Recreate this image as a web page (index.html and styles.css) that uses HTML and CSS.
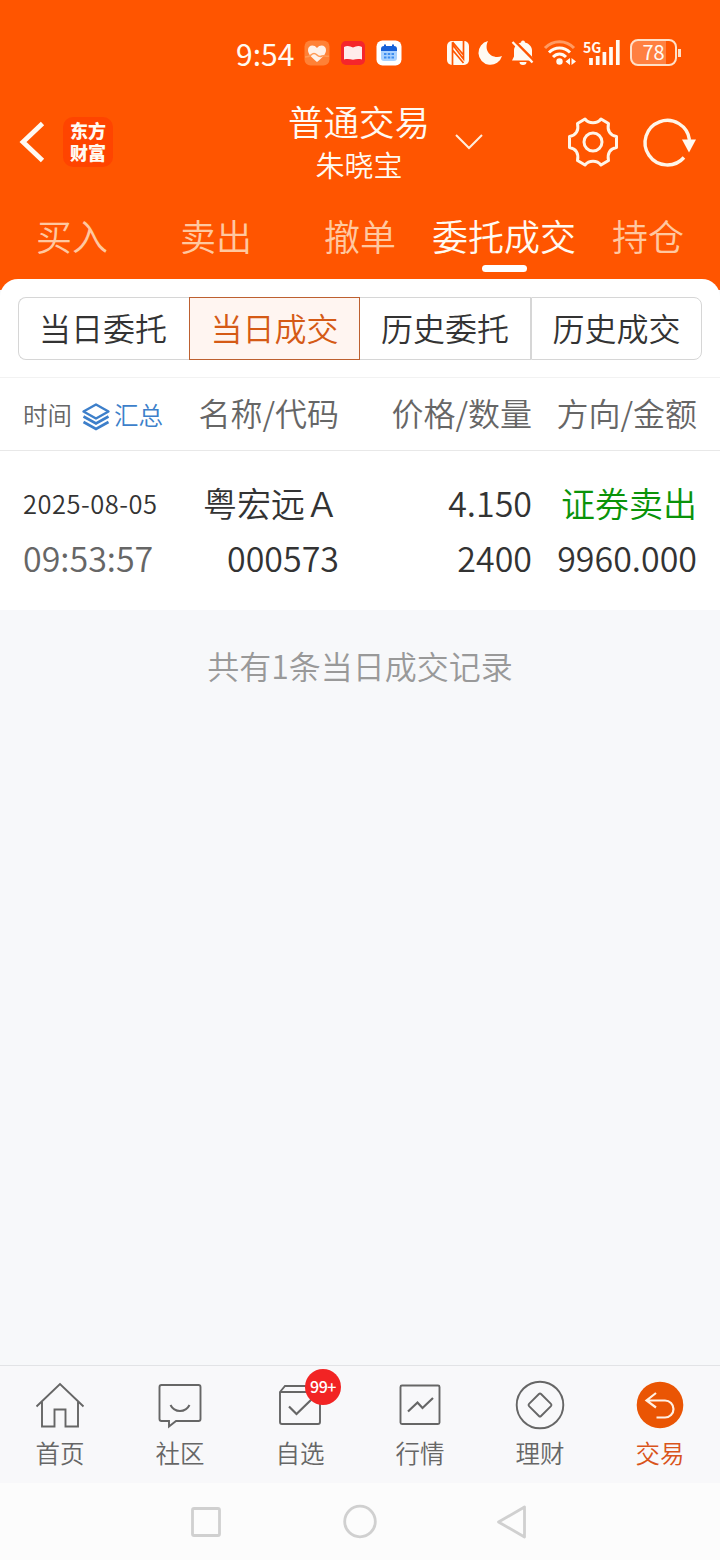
FILE: index.html
```html
<!DOCTYPE html>
<html lang="zh-CN">
<head>
    <meta charset="UTF-8">
    <meta name="viewport" content="width=device-width, initial-scale=1.0">
    <title>普通交易</title>
    <link rel="stylesheet" href="styles.css">
</head>
<body>
    <div class="app">
        <header class="header">
            <div class="status-bar">
                <span class="clock">9:54</span>
                <div class="status-apps">
                    <svg width="26" height="26" viewBox="0 0 26 26">
                        <rect x="0.5" y="0.5" width="25" height="25" rx="6" fill="#ff8136"/>
                        <path d="M13 22C7 17 4 14 4 10c0-5 6-6 9-2 3-4 9-3 9 2 0 4-3 7-9 12z" fill="#fff1e8"/>
                        <path d="M1 17c3 0 4 0 6-2s4-2 6 0 3 2 5 1 4 1 7 0" fill="none" stroke="#ff9a55" stroke-width="1.6"/>
                    </svg>
                    <svg width="26" height="26" viewBox="0 0 26 26">
                        <rect x="1" y="1" width="24" height="24" rx="5" fill="#f5262b"/>
                        <path d="M4 7c3-1.500 6-1 9 .6C16 6 19 5.500 22 7v12.500c-3-.6-6-.5-9 .3-3-.8-6-.9-9-.3z" fill="#ffeceb"/>
                    </svg>
                    <svg width="26" height="26" viewBox="0 0 26 26">
                        <rect x="0.500" y="0.500" width="25" height="25" rx="6" fill="#fff"/>
                        <path d="M5 11h16v7a3 3 0 0 1-3 3H8a3 3 0 0 1-3-3z" fill="#a9d2ff"/>
                        <path d="M5 11V9a3 3 0 0 1 3-3h10a3 3 0 0 1 3 3v2z" fill="#1560d8"/>
                        <path d="M9 4.500v3M17 4.500v3" stroke="#1560d8" stroke-width="2"/>
                        <path d="M8 14h10M8 17.500h10" stroke="#3d8df0" stroke-width="2" stroke-dasharray="2.500 1.250"/>
                    </svg>
                </div>
                <div class="status-icons">
                    <svg width="22" height="24" viewBox="0 0 22 24">
                        <rect x="0" y="0" width="22" height="24" rx="5" fill="#fffaf2"/>
                        <path d="M5.500 24V3.500L16.500 18V0M5.500 9l11 13M5.500 1l11 13" fill="none" stroke="#ff5500" stroke-width="1.700"/>
                    </svg>
                    <svg width="24" height="24" viewBox="0 0 24 24">
                        <path d="M10 0A12 12 0 1 0 24 15C14 19 5 10 10 0z" fill="#fffaf2"/>
                    </svg>
                    <svg width="24" height="25" viewBox="0 0 24 25">
                        <path d="M12 0.500a2 2 0 0 1 2 2c4 1 7 4 7 8v6l2 4H1l2-4v-6c0-4 3-7 7-8a2 2 0 0 1 2-2zM8.500 22h7a3.500 3 0 0 1-7 0z" fill="#fffaf2"/>
                        <path d="M3.500 1l20 20" stroke="#ff5500" stroke-width="2.500"/>
                        <path d="M1.500 2l20 20.500" stroke="#fffaf2" stroke-width="2.300"/>
                    </svg>
                    <svg width="32" height="25" viewBox="0 0 32 25">
                        <path d="M1 8c8-8.500 21-8.500 29 0" fill="none" stroke="#ff9b63" stroke-width="3"/>
                        <path d="M5 12.500c6-6 15-6 21 0M9 17c4-4 9-4 13 0" fill="none" stroke="#fffaf2" stroke-width="3"/>
                        <circle cx="15.500" cy="21.500" r="3.200" fill="#fffaf2"/>
                        <path d="M26 18v7l-4.500-3.500zM27.500 18v7l4.500-3.500z" fill="#fffaf2"/>
                    </svg>
                    <div class="signal">
                        <span class="signal-label">5G</span>
                        <svg width="31" height="25" viewBox="0 0 31 25">
                            <path d="M2 25v-7M8.700 25v-9M15.400 25v-13M22 25V7M28.800 25V0" stroke="#fffaf2" stroke-width="3.700"/>
                        </svg>
                    </div>
                    <div class="battery">78</div>
                </div>
            </div>

            <div class="title-bar">
                <svg width="26" height="42" viewBox="0 0 26 42">
                    <path d="M23.500 2.500L4 21l19.500 18.500" fill="none" stroke="#fffaf2" stroke-width="4.800"/>
                </svg>
                <div class="logo">
                    <span>东方</span>
                    <span>财富</span>
                </div>
                <div class="title">
                    <h1>普通交易</h1>
                    <p>朱晓宝</p>
                </div>
                <svg class="chevron" width="28" height="18" viewBox="0 0 28 18">
                    <path d="M1 2l13 13L27 2" fill="none" stroke="#ffeedd" stroke-width="2"/>
                </svg>
                <svg class="gear" width="50" height="50" viewBox="0 0 50 50">
                    <path d="M9.500 6.500L17 2c4 5 12 5 16 0l7.500 4.500c-1.500 7 1.500 12 8 13v11c-6.500 1-9.500 6-8 13L33 48c-4-5-12-5-16 0l-7.500-4.500c1.500-7-1.500-12-8-13v-11c6.500-1 9.500-6 8-13z" fill="none" stroke="#fff5e8" stroke-width="3" stroke-linejoin="round"/>
                    <circle cx="25" cy="25" r="9" fill="none" stroke="#fff5e8" stroke-width="3"/>
                </svg>
                <svg class="refresh" width="54" height="50" viewBox="0 0 54 50">
                    <path d="M41 40.500A22.300 22.300 0 1 1 46.500 23" fill="none" stroke="#fff5e8" stroke-width="3.400"/>
                    <path d="M39 22.500h14l-7 13z" fill="#fffaf2"/>
                </svg>
            </div>

            <nav class="tabs">
                <a class="tab">买入</a>
                <a class="tab">卖出</a>
                <a class="tab">撤单</a>
                <a class="tab active">委托成交</a>
                <a class="tab">持仓</a>
            </nav>
        </header>

        <main class="content">
            <section class="sheet">
                <div class="segments">
                    <a class="segment">当日委托</a>
                    <a class="segment active">当日成交</a>
                    <a class="segment">历史委托</a>
                    <a class="segment">历史成交</a>
                </div>

                <div class="row table-head">
                    <div class="time-head">
                        <span>时间</span>
                        <svg width="28" height="28" viewBox="0 0 28 28">
                            <path d="M14 1.500L26.500 8.500 14 15.500 1.500 8.500z" fill="none" stroke="#3d7fca" stroke-width="2.400" stroke-linejoin="round"/>
                            <path d="M1.500 13.500L14 20.500l12.500-7M1.500 19L14 26l12.500-7" fill="none" stroke="#3d7fca" stroke-width="2.600"/>
                        </svg>
                        <span class="summary">汇总</span>
                    </div>
                    <span>名称/代码</span>
                    <span>价格/数量</span>
                    <span>方向/金额</span>
                </div>

                <div class="row record">
                    <span class="date">2025-08-05</span>
                    <span>粤宏远Ａ</span>
                    <span>4.150</span>
                    <span class="sell">证券卖出</span>
                    <span class="time">09:53:57</span>
                    <span>000573</span>
                    <span>2400</span>
                    <span>9960.000</span>
                </div>
            </section>
            <p class="total">共有1条当日成交记录</p>
        </main>

        <nav class="bottom-nav">
            <a class="nav-item">
                <svg width="50" height="50" viewBox="0 0 50 50">
                    <path d="M1.500 25.500L25 3l23.500 22.500M7 21v24.500h12.500v-17h11v17H43V21" fill="none" stroke="#666" stroke-width="1.900"/>
                </svg>
                <span>首页</span>
            </a>
            <a class="nav-item">
                <svg width="50" height="50" viewBox="0 0 50 50">
                    <path d="M6.500 4h37a2 2 0 0 1 2 2v32a2 2 0 0 1-2 2H21l-7 5.500V40H6.500a2 2 0 0 1-2-2V6a2 2 0 0 1 2-2z" fill="none" stroke="#666" stroke-width="1.900"/>
                    <path d="M15.500 24c4 8 15 8 19 0" fill="none" stroke="#666" stroke-width="2"/>
                </svg>
                <span>社区</span>
            </a>
            <a class="nav-item">
                <svg width="50" height="50" viewBox="0 0 50 50">
                    <path d="M5 11l5-6h29l6 6v30a2 2 0 0 1-2 2H7a2 2 0 0 1-2-2zM5 11h40" fill="none" stroke="#666" stroke-width="1.900"/>
                    <path d="M14 25.500l7.500 7.500L38 17" fill="none" stroke="#666" stroke-width="2.200"/>
                </svg>
                <b class="badge">99+</b>
                <span>自选</span>
            </a>
            <a class="nav-item">
                <svg width="50" height="50" viewBox="0 0 50 50">
                    <rect x="5.500" y="4.500" width="39" height="38.500" rx="1.500" fill="none" stroke="#666" stroke-width="1.900"/>
                    <path d="M13 30.500l9.500-9 5 5.500L38 17" fill="none" stroke="#666" stroke-width="2.200"/>
                </svg>
                <span>行情</span>
            </a>
            <a class="nav-item">
                <svg width="50" height="50" viewBox="0 0 50 50">
                    <circle cx="25" cy="24" r="23.300" fill="none" stroke="#666" stroke-width="1.900"/>
                    <rect x="16.500" y="15.500" width="17" height="17" rx="1.500" transform="rotate(45 25 24)" fill="none" stroke="#666" stroke-width="1.900"/>
                </svg>
                <span>理财</span>
            </a>
            <a class="nav-item active">
                <svg width="50" height="50" viewBox="0 0 50 50">
                    <circle cx="25" cy="24" r="23.300" fill="#ea5504"/>
                    <path d="M21 12L11.500 19.500l9.500 7M12 19.500h18a8.500 8.500 0 0 1 0 17h-8.500" fill="none" stroke="#fff0e4" stroke-width="2.200"/>
                </svg>
                <span>交易</span>
            </a>
        </nav>

        <div class="system-nav">
            <svg width="32" height="34" viewBox="0 0 32 34"><rect x="2.500" y="3.500" width="27" height="27" rx="1.500"/></svg>
            <svg width="34" height="34" viewBox="0 0 34 34"><circle cx="17" cy="16.500" r="15.300"/></svg>
            <svg width="32" height="34" viewBox="0 0 32 34"><path d="M26.500 2v30L.5 17z"/></svg>
        </div>
    </div>
</body>
</html>
```

FILE: styles.css
```css
:root {
    --orange: #ff5500;
    --cream: #fffaf2;
    --text: #333;
    --text-light: #666;
    --page-bg: #f7f8fa;
}

* {
    box-sizing: border-box;
}

body {
    margin: 0;
    font-family: "Noto Sans CJK SC", sans-serif;
    font-weight: 350;
    color: var(--text);
    background: var(--page-bg);
}

h1,
p {
    margin: 0;
    font-weight: inherit;
}

svg {
    display: block;
    flex-shrink: 0;
    overflow: visible;
}

.app {
    width: 720px;
    height: 1560px;
    display: flex;
    flex-direction: column;
    overflow: hidden;
}

/* header */
.header {
    height: 290px;
    flex-shrink: 0;
    background: var(--orange);
    color: var(--cream);
}

.status-bar {
    height: 92px;
    padding: 13px 40px 0 236px;
    display: flex;
    align-items: center;
}

.clock {
    width: 68px;
    font-size: 30px;
    font-weight: 400;
    line-height: 40px;
}

.status-apps {
    display: flex;
    gap: 10px;
}

.status-icons {
    margin-left: 45px;
    display: flex;
    align-items: center;
    gap: 9px;
}

.signal {
    position: relative;
    width: 36px;
    padding-left: 4px;
}

.signal-label {
    position: absolute;
    left: -2px;
    top: 0;
    font: 700 14px/14px "Noto Sans CJK SC", sans-serif;
}

.battery {
    position: relative;
    width: 47px;
    height: 27px;
    border: 2px solid #ffe0c8;
    border-radius: 8px;
    background: linear-gradient(to right, #ff8040 78%, var(--orange) 78%);
    text-align: center;
    font: 400 20px/22px "Noto Sans CJK SC", sans-serif;
}

.battery::after {
    content: "";
    position: absolute;
    right: -6px;
    top: 8px;
    width: 3px;
    height: 8px;
    background: #ffe0c8;
}

.title-bar {
    height: 100px;
    padding: 0 22px 0 19px;
    display: flex;
    align-items: center;
}

.logo {
    width: 50px;
    height: 50px;
    margin-left: 18px;
    padding-top: 2px;
    display: flex;
    flex-direction: column;
    border-radius: 10px;
    background: #ff4400;
    text-align: center;
    font-size: 18px;
    font-weight: 900;
    line-height: 22px;
}

.title {
    width: 144px;
    margin-left: 174px;
    text-align: center;
}

.title h1 {
    font-size: 35.5px;
    line-height: 44px;
    white-space: nowrap;
}

.title p {
    font-size: 29px;
    line-height: 42px;
}

.chevron {
    margin-left: 24px;
}

.gear {
    margin-left: 85px;
}

.refresh {
    margin-left: 25px;
}

.tabs {
    height: 87px;
    display: grid;
    grid-template-columns: repeat(5, 144px);
}

.tab {
    display: flex;
    flex-direction: column;
    align-items: center;
    font-size: 36px;
    line-height: 86px;
    color: #ffc8a0;
}

.tab.active {
    color: var(--cream);
}

.tab.active::after {
    content: "";
    width: 45px;
    height: 7px;
    margin-top: -13px;
    border-radius: 4px;
    background: #fff;
}

/* content */
.content {
    flex: 1;
    margin-top: -11px;
}

.sheet {
    height: 331px;
    padding-top: 18px;
    border-radius: 18px 18px 0 0;
    background: #fff;
}

.segments {
    height: 63px;
    margin: 0 18px 17px;
    display: grid;
    grid-template-columns: repeat(4, 1fr);
}

.segment {
    border: 1px solid #d6d6d6;
    text-align: center;
    font-size: 32px;
    line-height: 59px;
}

.segment:first-child {
    border-right: 0;
    border-radius: 8px 0 0 8px;
    padding-right: 2px;
}

.segment:nth-child(3) {
    border-left: 0;
}

.segment:last-child {
    border-radius: 0 8px 8px 0;
}

.segment.active {
    border-color: #bd6030;
    background: #fff5f1;
    color: #d55a16;
}

.row {
    padding: 0 23px;
    display: grid;
    grid-template-columns: 147px 169px 193px 165px;
    text-align: right;
    white-space: nowrap;
}

.table-head {
    height: 74px;
    border-top: 1px solid #f2f2f2;
    border-bottom: 1px solid #e8e8e8;
    color: var(--text-light);
    font-size: 32px;
    line-height: 69px;
}

.time-head {
    height: 72px;
    display: flex;
    align-items: center;
    font-size: 24.5px;
    padding-top: 6px;
    line-height: 64px;
}

.time-head span {
    margin-top: -4px;
}

.time-head svg {
    margin: 0 4px 0 10px;
}

.summary {
    color: #3d7fca;
}

.record {
    padding-top: 24px;
    font-size: 34px;
    line-height: 55px;
}

.date,
.time {
    text-align: left;
}

.date {
    font-size: 25.5px;
    letter-spacing: 0.5px;
}

.time {
    color: var(--text-light);
}

.sell {
    color: #0a9309;
}

.total {
    margin-top: 32px;
    text-align: center;
    color: #999;
    font-size: 32px;
    line-height: 46px;
}

/* bottom navigation */
.bottom-nav {
    height: 118px;
    padding-top: 15px;
    display: grid;
    grid-template-columns: repeat(6, 1fr);
    border-top: 1px solid #e2e3e6;
    background: #f8f8fa;
}

.nav-item {
    position: relative;
    display: flex;
    flex-direction: column;
    align-items: center;
    color: var(--text-light);
    font-size: 24.5px;
    line-height: 43px;
}

.nav-item.active {
    color: #d9541a;
}

.badge {
    position: absolute;
    left: 65px;
    top: -12px;
    width: 36px;
    height: 36px;
    border-radius: 50%;
    background: #f22424;
    color: #fff;
    text-align: center;
    font-size: 16px;
    font-weight: 500;
    line-height: 34px;
    letter-spacing: -0.5px;
}

.system-nav {
    height: 77px;
    display: flex;
    justify-content: center;
    align-items: center;
    gap: 121px;
    background: #fcfcfc;
}

.system-nav svg {
    fill: none;
    stroke: #d0d0d0;
    stroke-width: 2.8;
    stroke-linejoin: round;
}
```
